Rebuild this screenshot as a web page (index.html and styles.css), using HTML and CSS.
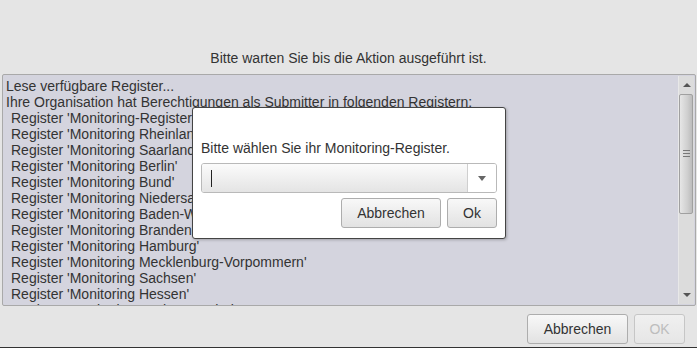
FILE: index.html
```html
<!DOCTYPE html>
<html lang="de">
  <head>
    <meta charset="UTF-8" />
    <meta name="viewport" content="width=device-width, initial-scale=1.0" />
    <title>Register</title>
    <link rel="stylesheet" href="styles.css">
  </head>
  <body>
    <div class="window">
      <header class="status">Bitte warten Sie bis die Aktion ausgeführt ist.</header>
      <main class="log">
        <div class="log-lines">
          <p>Lese verfügbare Register...</p>
          <p>Ihre Organisation hat Berechtigungen als Submitter in folgenden Registern:</p>
          <p class="item">Register 'Monitoring-Register Schleswig-Holstein'</p>
          <p class="item">Register 'Monitoring Rheinland-Pfalz'</p>
          <p class="item">Register 'Monitoring Saarland'</p>
          <p class="item">Register 'Monitoring Berlin'</p>
          <p class="item">Register 'Monitoring Bund'</p>
          <p class="item">Register 'Monitoring Niedersachsen'</p>
          <p class="item">Register 'Monitoring Baden-Württemberg'</p>
          <p class="item">Register 'Monitoring Brandenburg'</p>
          <p class="item">Register 'Monitoring Hamburg'</p>
          <p class="item">Register 'Monitoring Mecklenburg-Vorpommern'</p>
          <p class="item">Register 'Monitoring Sachsen'</p>
          <p class="item">Register 'Monitoring Hessen'</p>
          <p class="item">Register 'Monitoring Sachsen-Anhalt'</p>
        </div>
        <div class="scrollbar">
          <span class="arrow up"></span>
          <div class="thumb"><span class="grip"></span></div>
          <span class="arrow down"></span>
        </div>
      </main>
      <footer class="actions">
        <button class="btn">Abbrechen</button>
        <button class="btn ok" disabled>OK</button>
      </footer>
    </div>

    <div class="dialog">
      <p class="dialog-text">Bitte wählen Sie ihr Monitoring-Register.</p>
      <div class="combo">
        <div class="combo-input"><span class="caret"></span></div>
        <div class="combo-button"><span class="triangle"></span></div>
      </div>
      <div class="dialog-actions">
        <button class="btn cancel">Abbrechen</button>
        <button class="btn small">Ok</button>
      </div>
    </div>
  </body>
</html>
```
FILE: styles.css
```css
* {
  box-sizing: border-box;
}

body {
  margin: 0;
  padding: 0;
  width: 697px;
  height: 348px;
  overflow: hidden;
  background-color: #e5e5e5;
  font-family: Arial, "Liberation Sans", sans-serif;
  font-size: 14px;
  color: #333;
}

.window {
  display: flex;
  flex-direction: column;
  height: 348px;
  border-bottom: 1px solid #333;
}

.status {
  height: 74px;
  padding-top: 50px;
  line-height: 16px;
  text-align: center;
}

.log {
  display: flex;
  height: 232px;
  margin: 0 1px 0 2px;
  border: 1px solid #a9a9a9;
  border-radius: 2px;
  background-color: #d4d4de;
  overflow: hidden;
}

.log-lines {
  flex: 1;
  padding: 3px 0 0 3px;
  overflow: hidden;
  white-space: nowrap;
}

.log-lines p {
  margin: 0;
  line-height: 16px;
}

.log-lines .item {
  padding-left: 5px;
}

.scrollbar {
  position: relative;
  width: 16px;
  margin: 1px 1px 1px 0;
  background-color: #dcdcdc;
  border-left: 1px solid #e8e8e8;
}

.arrow {
  position: absolute;
  left: 4px;
  width: 0;
  height: 0;
  border-left: 4px solid transparent;
  border-right: 4px solid transparent;
}

.arrow.up {
  top: 7px;
  border-bottom: 4px solid #555;
}

.arrow.down {
  bottom: 7px;
  border-top: 4px solid #555;
}

.thumb {
  position: absolute;
  top: 18px;
  left: 0;
  width: 14px;
  height: 120px;
  border: 1px solid #a0a0a0;
  border-radius: 2px;
  background: linear-gradient(to right, #e6e6e6, #d0d0d0 60%, #bcbcbc);
}

.grip {
  position: absolute;
  top: 55px;
  left: 3px;
  width: 7px;
  height: 7px;
  border-top: 1px solid #777;
  border-bottom: 1px solid #777;
}

.grip::after {
  content: "";
  position: absolute;
  top: 2px;
  left: 0;
  width: 7px;
  height: 0;
  border-top: 1px solid #777;
}

.actions {
  display: flex;
  justify-content: flex-end;
  gap: 6px;
  padding: 8px 12px 0 0;
  flex: 1;
}

.btn {
  height: 30px;
  padding: 0 14px;
  border: 1px solid #adadad;
  border-radius: 3px;
  background: linear-gradient(#f8f8f8, #e2e2e2);
  font-family: Arial, "Liberation Sans", sans-serif;
  font-size: 14px;
  color: #333;
}

.actions .btn {
  width: 101px;
}

.actions .ok {
  width: 51px;
  color: #bdbdbd;
  border-color: #c6c6c6;
  background: linear-gradient(#f0f0f0, #e6e6e6);
}

.dialog {
  position: absolute;
  left: 192px;
  top: 107px;
  width: 314px;
  height: 132px;
  padding: 32px 8px 0 8px;
  background-color: #fff;
  border: 1px solid #444;
  border-radius: 3px;
  box-shadow: 1px 1px 3px rgba(0, 0, 0, 0.25);
}

.dialog-text {
  margin: 0 0 7px 0;
  line-height: 16px;
}

.combo {
  display: flex;
  height: 30px;
  border: 1px solid #b9b9b9;
  border-radius: 3px;
  overflow: hidden;
}

.combo-input {
  flex: 1;
  position: relative;
  background: linear-gradient(#fbfbfb, #e4e4e4);
}

.caret {
  position: absolute;
  left: 9px;
  top: 6px;
  width: 1px;
  height: 17px;
  background-color: #222;
}

.combo-button {
  position: relative;
  width: 29px;
  background-color: #fff;
  border-left: 1px solid #cfcfcf;
}

.triangle {
  position: absolute;
  left: 10px;
  top: 12px;
  width: 0;
  height: 0;
  border-left: 4px solid transparent;
  border-right: 4px solid transparent;
  border-top: 5px solid #666;
}

.dialog-actions {
  display: flex;
  justify-content: flex-end;
  gap: 6px;
  margin-top: 5px;
}

.dialog-actions .cancel {
  width: 100px;
}

.dialog-actions .small {
  width: 50px;
}
```
